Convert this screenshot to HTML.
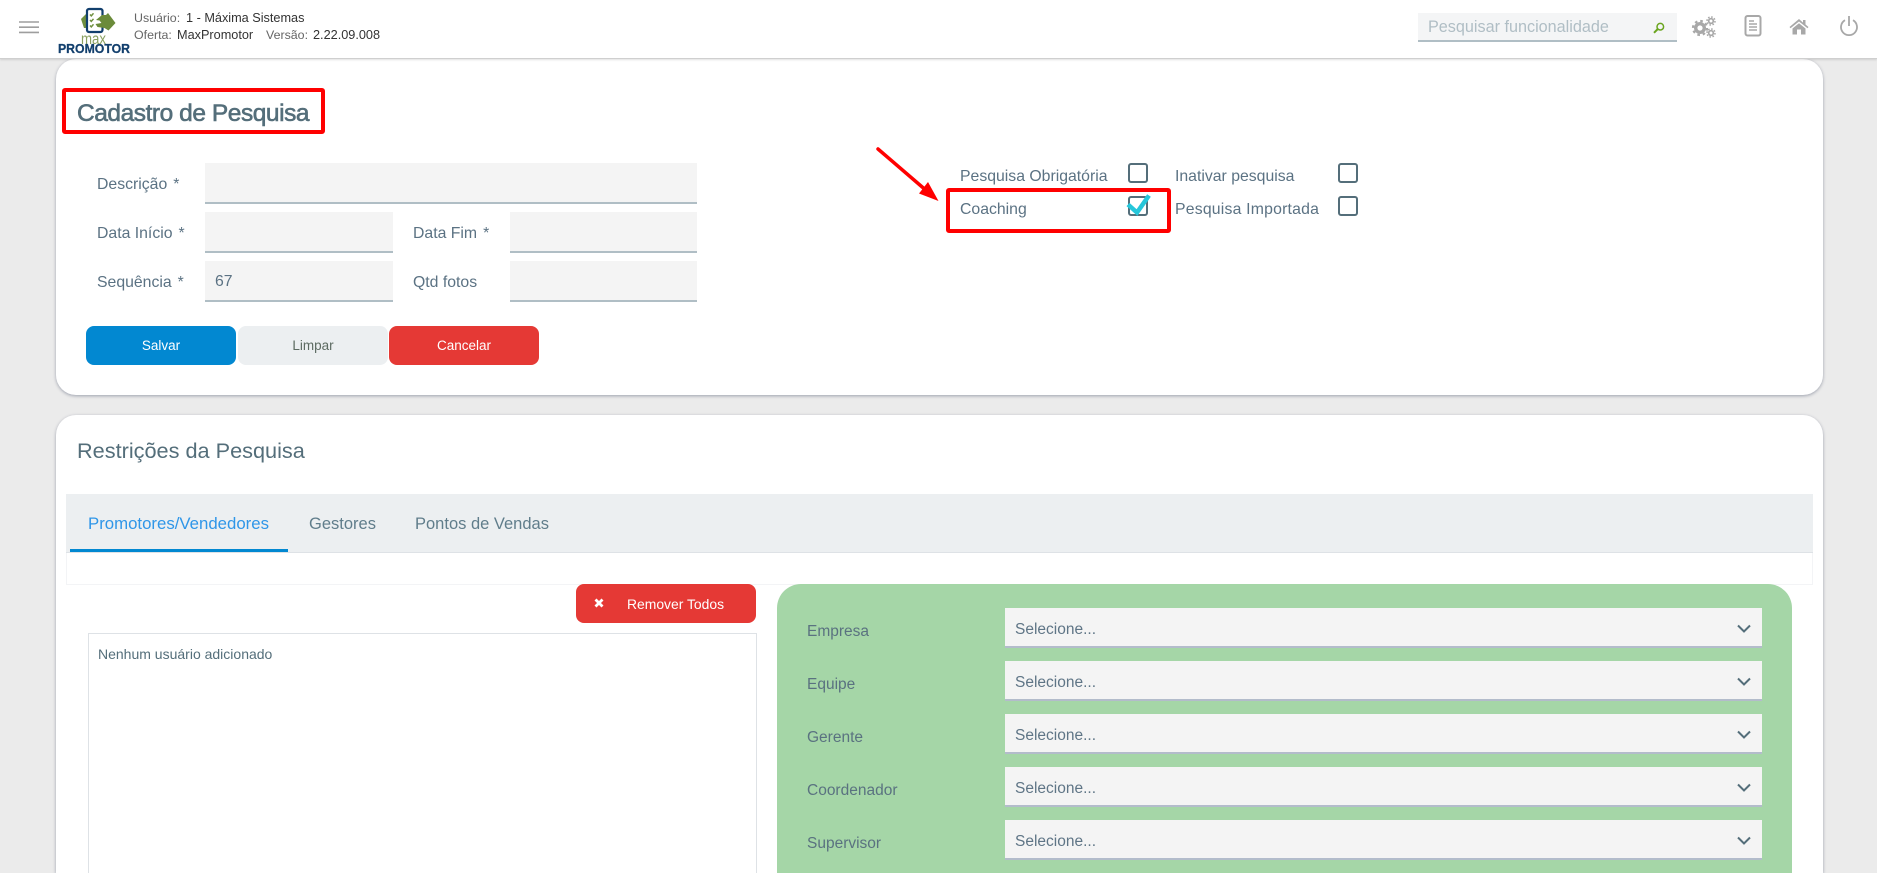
<!DOCTYPE html>
<html lang="pt-BR">
<head>
<meta charset="utf-8">
<title>Cadastro de Pesquisa</title>
<style>
html,body{margin:0;padding:0;width:1877px;height:873px;overflow:hidden;background:#ebebeb;font-family:"Liberation Sans",Arial,sans-serif;color:#546e7a}
*{box-sizing:border-box}
#w{position:absolute;left:0;top:0;width:1877px;height:873px;overflow:hidden;background:#ebebeb}
.a{position:absolute}
.t{position:absolute;white-space:nowrap;line-height:20px;height:20px}
#hdr{left:0;top:0;width:1877px;height:59px;background:#fff;border-bottom:1px solid #cfcfcf;box-shadow:0 1px 2px rgba(0,0,0,.12);z-index:5}
.card{background:#fff;border-radius:20px;box-shadow:0 1px 3px rgba(40,50,80,.4)}
.in{position:absolute;background:#f4f4f4;border-bottom:2px solid #b0bec5}
.btn{position:absolute;height:39px;border-radius:8px;text-align:center;line-height:39px;font-size:13.5px;color:#fff}
.lbl{font-size:15.8px;color:#5b7283}
.lbl i{font-style:normal;margin-left:6px}
.cb{position:absolute;width:20px;height:20px;border:2px solid #546e7a;border-radius:3px;background:#fff}
.red{position:absolute;border:4px solid #f00;border-radius:3px}
.sel{position:absolute;left:1005px;width:757px;height:40px;background:#f4f4f4;border-bottom:2px solid #b3bccb}
.st{position:absolute;left:1015px;font-size:15.5px;line-height:20px;color:#5f7586;white-space:nowrap}
.gl{position:absolute;left:807px;font-size:15.5px;line-height:20px;color:#5a7280;white-space:nowrap}
.chev{position:absolute;left:1737px}
</style>
</head>
<body>
<div id="w">

<div class="a" id="hdr">
  <svg class="a" style="left:19px;top:21px" width="20" height="13" viewBox="0 0 20 13"><path d="M0 1h20M0 6.2h20M0 11.4h20" stroke="#9e9e9e" stroke-width="1.6" fill="none"/></svg>
  <svg class="a" style="left:56px;top:4px" width="78" height="52" viewBox="56 4 78 52">
    <path d="M81 19l6-6v15h-3z" fill="#6f8f3f"/>
    <rect x="87" y="9" width="15.500" height="23" rx="2" fill="#fff" stroke="#123f6d" stroke-width="2.200"/>
    <path d="M90 14.500l1.300 1.400 2.200-2.600M90 20l1.300 1.400 2.200-2.600M90 25.500l1.300 1.400 2.200-2.600" stroke="#6f8f3f" stroke-width="1.500" fill="none"/>
    <path d="M96 20l6-5 4 0 2-2 7.500 10-7 7.500-4-2.500-7-1-2-3 6-1-2-2.500z" fill="#6b8b3a"/>
    <text x="81" y="44" font-family="Liberation Sans" font-size="15.500" fill="#8aa060" textLength="25" lengthAdjust="spacingAndGlyphs">max</text>
    <text x="58" y="53" font-family="Liberation Sans" font-size="12.800" font-weight="700" fill="#123f6d" stroke="#123f6d" stroke-width=".25" textLength="72" lengthAdjust="spacingAndGlyphs">PROMOTOR</text>
  </svg>
  <span class="t" style="left:134px;top:8px;font-size:12.4px;color:#666">Usuário:</span>
  <span class="t" style="left:186px;top:8px;font-size:12.7px;color:#333">1 - Máxima Sistemas</span>
  <span class="t" style="left:134px;top:25px;font-size:12.4px;color:#666">Oferta:</span>
  <span class="t" style="left:177px;top:25px;font-size:12.7px;color:#333">MaxPromotor</span>
  <span class="t" style="left:266px;top:25px;font-size:12.4px;color:#666">Versão:</span>
  <span class="t" style="left:313px;top:25px;font-size:12.7px;color:#333">2.22.09.008</span>

  <div class="a" style="left:1418px;top:13px;width:259px;height:29px;background:#f4f5f6;border-bottom:2px solid #b0bec5"></div>
  <span class="t" style="left:1428px;top:17px;font-size:16.2px;color:#b0bec5">Pesquisar funcionalidade</span>
  <svg class="a" style="left:1652px;top:22px" width="14" height="12" viewBox="0 0 14 12"><circle cx="8.300" cy="4.700" r="3.300" fill="none" stroke="#6aa51f" stroke-width="1.500"/><path d="M5.800 7L2 10.800" stroke="#6aa51f" stroke-width="2"/></svg>
  <svg class="a" style="left:1691px;top:15px" width="26" height="23" viewBox="0 0 26 23" fill="none" stroke="#a8a8a8">
    <circle cx="9" cy="13" r="4.300" stroke-width="3.400"/><circle cx="9" cy="13" r="7" stroke-width="2.200" stroke-dasharray="2.600 2.900"/>
    <circle cx="20" cy="6" r="2.300" stroke-width="1.700"/><circle cx="20" cy="6" r="4" stroke-width="1.500" stroke-dasharray="1.600 1.540"/>
    <circle cx="20" cy="18" r="2.300" stroke-width="1.700"/><circle cx="20" cy="18" r="4" stroke-width="1.500" stroke-dasharray="1.600 1.540"/>
  </svg>
  <svg class="a" style="left:1744px;top:14px" width="18" height="23" viewBox="0 0 18 23" fill="none" stroke="#a8a8a8"><rect x="1.500" y="2" width="15" height="19.500" rx="2" stroke-width="2"/><path d="M5 7h5M5 10h8M5 13h8M5 16h8" stroke-width="1.400"/></svg>
  <svg class="a" style="left:1789px;top:18px" width="20" height="17" viewBox="0 0 20 17"><path d="M10 1L0.500 9l1 1.300L10 3.500l8.500 6.800 1-1.300-3-2.500V2h-2.500v2.600zM3.500 10.500V16.500h4.500v-5h4v5h4.500v-6L10 5.200z" fill="#a8a8a8"/></svg>
  <svg class="a" style="left:1839px;top:15px" width="20" height="21" viewBox="0 0 20 21" fill="none" stroke="#a8a8a8" stroke-width="1.800"><path d="M6 5.200A8 8 0 1 0 14 5.200"/><path d="M10 1v10"/></svg>
</div>

<!-- Card 1 -->
<div class="a card" style="left:56px;top:59px;width:1767px;height:336px"></div>
<span class="t" style="left:77px;top:101px;height:26px;line-height:26px;font-size:24.500px;color:#546e7a;letter-spacing:-.45px;-webkit-text-stroke:.6px #546e7a">Cadastro de Pesquisa</span>
<div class="red" style="left:62px;top:88px;width:263px;height:46px"></div>

<span class="t lbl" style="left:97px;top:175px">Descrição<i>*</i></span>
<div class="in" style="left:205px;top:163px;width:492px;height:41px"></div>
<span class="t lbl" style="left:97px;top:224px">Data Início<i>*</i></span>
<div class="in" style="left:205px;top:212px;width:188px;height:41px"></div>
<span class="t lbl" style="left:413px;top:224px">Data Fim<i>*</i></span>
<div class="in" style="left:510px;top:212px;width:187px;height:41px"></div>
<span class="t lbl" style="left:97px;top:273px">Sequência<i>*</i></span>
<div class="in" style="left:205px;top:261px;width:188px;height:41px"></div>
<span class="t lbl" style="left:215px;top:272px">67</span>
<span class="t lbl" style="left:413px;top:273px">Qtd fotos</span>
<div class="in" style="left:510px;top:261px;width:187px;height:41px"></div>

<div class="btn" style="left:86px;top:326px;width:150px;background:#0288d1">Salvar</div>
<div class="btn" style="left:238px;top:326px;width:150px;background:#eceff1;color:#5d6b62">Limpar</div>
<div class="btn" style="left:389px;top:326px;width:150px;background:#e53935">Cancelar</div>

<svg class="a" style="left:870px;top:140px" width="80" height="70" viewBox="870 140 80 70">
  <path d="M878 149L928 192" stroke="#f00" stroke-width="3.500" stroke-linecap="round"/>
  <path d="M938.500 201L919 193.500 928 182z" fill="#f00"/>
</svg>

<span class="t lbl" style="left:960px;top:167px">Pesquisa Obrigatória</span>
<div class="cb" style="left:1128px;top:163px"></div>
<span class="t lbl" style="left:1175px;top:167px">Inativar pesquisa</span>
<div class="cb" style="left:1338px;top:163px"></div>
<span class="t lbl" style="left:960px;top:200px">Coaching</span>
<div class="cb" style="left:1128px;top:196px"></div>
<svg class="a" style="left:1124px;top:192px" width="30" height="26" viewBox="1124 192 30 26"><path d="M1128 204.500l9 8 12-17" fill="none" stroke="#26c6da" stroke-width="4.500"/></svg>
<span class="t lbl" style="left:1175px;top:200px;letter-spacing:.2px">Pesquisa Importada</span>
<div class="cb" style="left:1338px;top:196px"></div>
<div class="red" style="left:946px;top:188px;width:225px;height:45px"></div>

<!-- Card 2 -->
<div class="a card" style="left:56px;top:415px;width:1767px;height:458px;border-radius:20px 20px 0 0"></div>
<span class="t" style="left:77px;top:440px;height:22px;line-height:22px;font-size:21.700px;color:#546e7a">Restrições da Pesquisa</span>

<div class="a" style="left:66px;top:552px;width:1747px;height:33px;border:1px solid #f3f4f6;border-top:0"></div>
<div class="a" style="left:66px;top:494px;width:1747px;height:59px;background:#eceff1;border-bottom:1px solid #dee2e6"></div>
<span class="t" style="left:88px;top:514px;font-size:16.800px;color:#2f96e8">Promotores/Vendedores</span>
<div class="a" style="left:70px;top:549px;width:218px;height:3px;background:#0288d1"></div>
<span class="t" style="left:309px;top:514px;font-size:16.500px;color:#607d8b">Gestores</span>
<span class="t" style="left:415px;top:514px;font-size:16.500px;color:#607d8b">Pontos de Vendas</span>

<div class="btn" style="left:576px;top:584px;width:180px;background:#e53935"></div>
<svg class="a" style="left:594px;top:598px" width="10" height="10" viewBox="0 0 10 10"><path d="M1.500 1.500l7 7M8.500 1.500l-7 7" stroke="#fff" stroke-width="2.800"/></svg>
<span class="t" style="left:627px;top:594px;font-size:13.900px;color:#fff">Remover Todos</span>

<div class="a" style="left:88px;top:633px;width:669px;height:240px;border:1px solid #dee2e6;border-bottom:0;background:#fff"></div>
<span class="t" style="left:98px;top:644px;font-size:14px;color:#546e7a">Nenhum usuário adicionado</span>

<div class="a" style="left:777px;top:584px;width:1015px;height:289px;background:#a5d6a7;border-radius:24px 24px 0 0"></div>

<span class="gl" style="top:622px">Empresa</span>
<div class="sel" style="top:608px"></div><span class="st" style="top:620px">Selecione...</span>
<svg class="chev" style="top:624px" width="14" height="9" viewBox="0 0 14 9"><path d="M1 1.500l6 6 6-6" fill="none" stroke="#546e7a" stroke-width="2"/></svg>

<span class="gl" style="top:675px">Equipe</span>
<div class="sel" style="top:661px"></div><span class="st" style="top:673px">Selecione...</span>
<svg class="chev" style="top:677px" width="14" height="9" viewBox="0 0 14 9"><path d="M1 1.500l6 6 6-6" fill="none" stroke="#546e7a" stroke-width="2"/></svg>

<span class="gl" style="top:728px">Gerente</span>
<div class="sel" style="top:714px"></div><span class="st" style="top:726px">Selecione...</span>
<svg class="chev" style="top:730px" width="14" height="9" viewBox="0 0 14 9"><path d="M1 1.500l6 6 6-6" fill="none" stroke="#546e7a" stroke-width="2"/></svg>

<span class="gl" style="top:781px">Coordenador</span>
<div class="sel" style="top:767px"></div><span class="st" style="top:779px">Selecione...</span>
<svg class="chev" style="top:783px" width="14" height="9" viewBox="0 0 14 9"><path d="M1 1.500l6 6 6-6" fill="none" stroke="#546e7a" stroke-width="2"/></svg>

<span class="gl" style="top:834px">Supervisor</span>
<div class="sel" style="top:820px"></div><span class="st" style="top:832px">Selecione...</span>
<svg class="chev" style="top:836px" width="14" height="9" viewBox="0 0 14 9"><path d="M1 1.500l6 6 6-6" fill="none" stroke="#546e7a" stroke-width="2"/></svg>

</div>
</body>
</html>
